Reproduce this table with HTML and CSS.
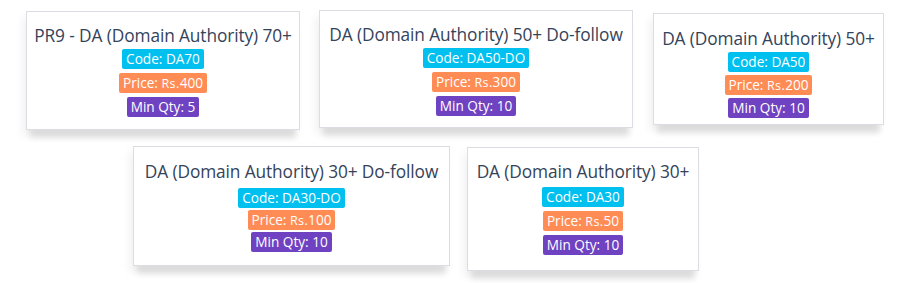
FILE: index.html
```html
<!DOCTYPE html>
<html>
<head>
<meta charset="utf-8">
<link rel="stylesheet" href="styles.css">
</head>
<body>
<div class="board">
  <div class="row row-top">
    <div class="card card-1">
      <div class="title">PR9 - DA (Domain Authority) 70+</div>
      <div class="badges">
        <span class="badge code">Code: DA70</span>
        <span class="badge price">Price: <span class="rs">Rs.</span>400</span>
        <span class="badge qty">Min Qty: 5</span>
      </div>
    </div>
    <div class="card card-2">
      <div class="title">DA (Domain Authority) 50+ Do-follow</div>
      <div class="badges">
        <span class="badge code">Code: DA50-DO</span>
        <span class="badge price">Price: <span class="rs">Rs.</span>300</span>
        <span class="badge qty">Min Qty: 10</span>
      </div>
    </div>
    <div class="card card-3">
      <div class="title">DA (Domain Authority) 50+</div>
      <div class="badges">
        <span class="badge code">Code: DA50</span>
        <span class="badge price">Price: <span class="rs">Rs.</span>200</span>
        <span class="badge qty">Min Qty: 10</span>
      </div>
    </div>
  </div>
  <div class="row row-bottom">
    <div class="card card-4">
      <div class="title">DA (Domain Authority) 30+ Do-follow</div>
      <div class="badges">
        <span class="badge code">Code: DA30-DO</span>
        <span class="badge price">Price: <span class="rs">Rs.</span>100</span>
        <span class="badge qty">Min Qty: 10</span>
      </div>
    </div>
    <div class="card card-5">
      <div class="title">DA (Domain Authority) 30+</div>
      <div class="badges">
        <span class="badge code">Code: DA30</span>
        <span class="badge price">Price: <span class="rs">Rs.</span>50</span>
        <span class="badge qty">Min Qty: 10</span>
      </div>
    </div>
  </div>
</div>
</body>
</html>
```

FILE: styles.css
```css
html, body {
  margin: 0;
  padding: 0;
  background: #ffffff;
}
body {
  font-family: "Open Sans", "Noto Sans", sans-serif;
  width: 902px;
  height: 283px;
  overflow: hidden;
}
.board {
  display: flex;
  flex-direction: column;
}
.row {
  display: flex;
  align-items: flex-start;
}
.row-top {
  height: 130px;
}
.card {
  box-sizing: border-box;
  background: #ffffff;
  border: 1px solid #dcdde2;
  box-shadow: 0 12px 6px -4px rgba(0, 0, 0, 0.1), -4px 6px 8px rgba(0, 0, 0, 0.05);
  padding: 12px 8px 0;
  display: flex;
  flex-direction: column;
  align-items: center;
}
.title {
  font-size: 17.3px;
  line-height: 24px;
  color: #34435a;
  white-space: nowrap;
  letter-spacing: -0.1px;
}
.badges {
  margin-top: 1px;
  display: flex;
  flex-direction: column;
  align-items: center;
  gap: 4px;
}
.badge {
  display: inline-block;
  height: 20px;
  line-height: 20px;
  padding: 0 4px;
  font-size: 13.6px;
  color: #ffffff;
  border-radius: 2px;
  white-space: nowrap;
}
.code { background: #00c0ef; }
.price { background: #ff8c55; }
.qty { background: #6f42c1; }
.rs {
  font-size: 12.5px;
  letter-spacing: 0.4px;
}
.card-1 { margin: 11px 0 0 26px; width: 274px; height: 119px; }
.card-2 { margin: 10px 0 0 19px; width: 314px; height: 118px; }
.card-3 { margin: 13px 0 0 20px; width: 231px; height: 112px; padding-top: 13px; }
.card-3 .badges { gap: 3px; }
.card-4 { margin: 16px 0 0 133px; width: 317px; height: 120px; padding-top: 13px; }
.card-4 .badges { margin-top: 4px; gap: 2px; }
.card-5 { margin: 17px 0 0 17px; width: 232px; height: 124px; padding-top: 12px; }
.card-5 .badges { margin-top: 3px; }
```
